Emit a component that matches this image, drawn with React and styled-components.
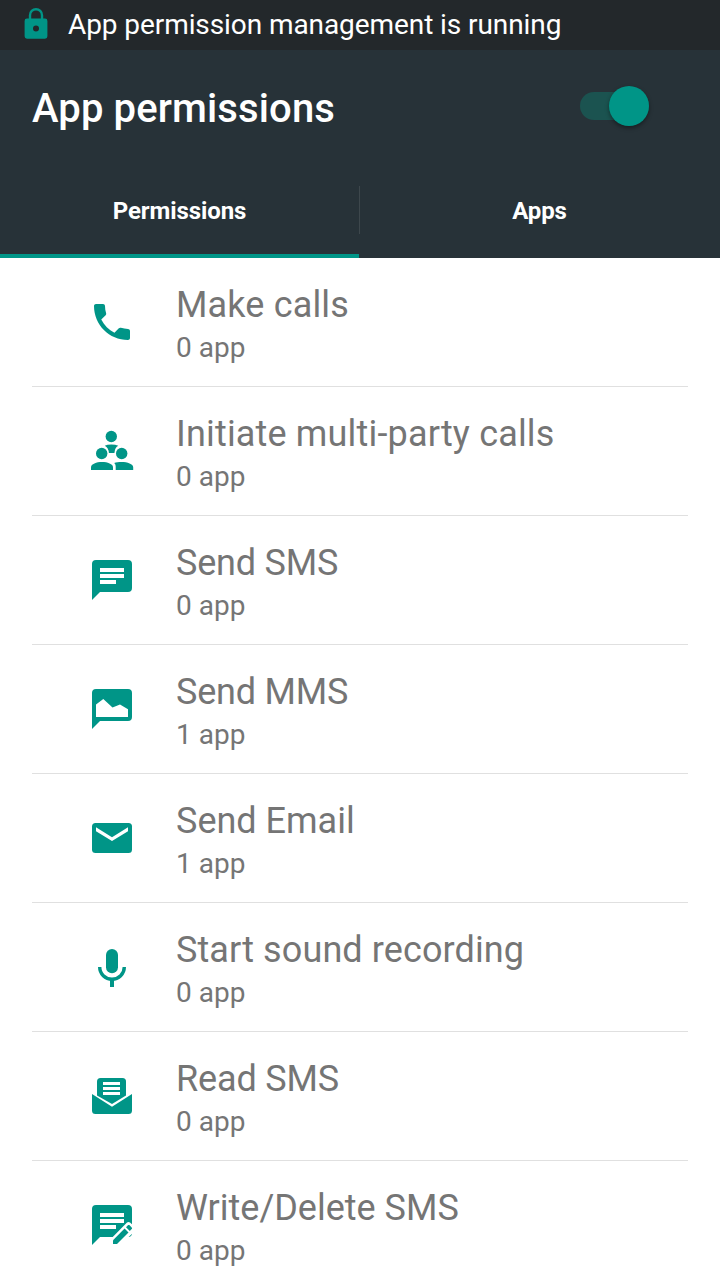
import React, { useState } from "react";
import styled, { createGlobalStyle } from "styled-components";

const GlobalStyle = createGlobalStyle`
  * {
    box-sizing: border-box;
  }

  body {
    margin: 0;
    background: #ffffff;
    font-family: Roboto, "Liberation Sans", sans-serif;
  }
`;

const Screen = styled.div`
  width: 720px;
  height: 1280px;
  overflow: hidden;
  background: #ffffff;
`;

const StatusBar = styled.div`
  display: flex;
  align-items: center;
  height: 50px;
  padding-left: 24px;
  background: #23282b;
  color: #ffffff;
  font-size: 28px;
  line-height: 50px;
  letter-spacing: -0.08px;
  white-space: nowrap;

  svg {
    width: 24px;
    height: 32px;
    margin: 0 20px 4px 0;
  }
`;

const Header = styled.header`
  height: 208px;
  background: #273238;
  color: #ffffff;
`;

const TitleBar = styled.div`
  display: flex;
  align-items: center;
  justify-content: space-between;
  height: 112px;
  padding: 0 71px 0 32px;
`;

const Title = styled.h1`
  margin: 6px 0 0;
  font-size: 40px;
  font-weight: 500;
  line-height: 48px;
  letter-spacing: 0.13px;
`;

const Toggle = styled.button`
  display: flex;
  align-items: center;
  justify-content: ${({ $on }) => ($on ? "flex-end" : "flex-start")};
  width: 69px;
  height: 28px;
  padding: 0;
  border: none;
  border-radius: 14px;
  background: ${({ $on }) => ($on ? "#1b5350" : "#4b5559")};
`;

const Thumb = styled.span`
  width: 40px;
  height: 40px;
  flex: none;
  border-radius: 50%;
  background: #009587;
  box-shadow: 0 2px 4px rgba(0, 0, 0, 0.4);
`;

const Tabs = styled.nav`
  display: flex;
  height: 96px;
`;

const Tab = styled.button`
  width: ${({ $width }) => $width}px;
  padding: 6px 0 0;
  border: none;
  border-bottom: 4px solid ${({ $active }) => ($active ? "#009587" : "transparent")};
  background: none;
  color: #ffffff;
  font-family: inherit;
  font-size: 24px;
  font-weight: 700;
  letter-spacing: -0.1px;
`;

const TabDivider = styled.span`
  width: 1px;
  height: 48px;
  margin-top: 24px;
  background: #3d474c;
`;

const List = styled.ul`
  margin: 0;
  padding: 0 32px;
  list-style: none;
`;

const Row = styled.li`
  display: flex;
  align-items: center;
  height: 129px;
  padding-left: 56px;
  border-bottom: 1px solid #e0e0e0;

  svg {
    width: 48px;
    height: 48px;
    margin-right: 40px;
  }
`;

const Label = styled.div`
  padding-top: 4px;
  color: #757575;
`;

const Name = styled.div`
  font-size: 36px;
  line-height: 44px;
  letter-spacing: ${({ $tracking }) => $tracking}px;
`;

const Count = styled.div`
  margin-top: 3px;
  font-size: 28px;
  line-height: 36px;
`;

const Icon = ({ children }) => (
  <svg viewBox="0 0 48 48" fill="#009587">
    {children}
  </svg>
);

const LockIcon = () => (
  <svg viewBox="0 0 24 32" fill="#009587">
    <path d="M6 12V8.200a6 6 0 0 1 12 0V12" fill="none" stroke="#009587" strokeWidth="2.400" />
    <path
      fillRule="evenodd"
      d="M3 11.500h18a2.400 2.400 0 0 1 2.400 2.400v15.400a2.400 2.400 0 0 1-2.400 2.400H3a2.400 2.400 0 0 1-2.400-2.400V13.900A2.400 2.400 0 0 1 3 11.500zM12 18.500a3 3 0 1 0 0 6 3 3 0 0 0 0-6z"
    />
  </svg>
);

const PhoneIcon = () => (
  <Icon>
    <path d="M13.250 21.590c2.880 5.660 7.510 10.290 13.180 13.170l4.400-4.410c.55-.55 1.340-.71 2.030-.49C35.100 30.610 37.510 31 40 31c1.110 0 2 .89 2 2v7c0 1.110-.89 2-2 2C21.220 42 6 26.780 6 8c0-1.110.9-2 2-2h7c1.110 0 2 .89 2 2 0 2.490.4 4.900 1.140 7.140.22.69.06 1.480-.49 2.030l-4.400 4.420z" />
  </Icon>
);

const PartyIcon = () => (
  <Icon>
    <circle cx="23.300" cy="9.500" r="5.700" />
    <path d="M16.800 18.700Q19 17.500 23.300 17.500t7 1.300Q27 20 26.400 26h-5.500Q20.500 20.500 16.800 18.700z" />
    <circle cx="13.700" cy="26.500" r="5.700" />
    <circle cx="33.700" cy="26.500" r="5.700" />
    <path d="M3 43v-2.700C3 37 8.500 35 14 35s11 2 11 5.300V43z" />
    <path d="M27.700 43v-3.200c0-1.800-.5-3-1.500-3.900 2-.6 4.500-.9 7.300-.9 6 0 11.700 2 11.700 5.300V43z" />
  </Icon>
);

const BUBBLE = "M8 4h32a4 4 0 0 1 4 4v24a4 4 0 0 1-4 4H12l-8 8V8a4 4 0 0 1 4-4z";

const SmsIcon = () => (
  <Icon>
    <path d={BUBBLE} />
    <path fill="#fff" d="M12 12h24v4H12zM12 18h24v4H12zM12 24h16v4H12z" />
  </Icon>
);

const MmsIcon = () => (
  <Icon>
    <path d={BUBBLE} />
    <path fill="#fff" d="M8 19.500l7.300-5.500 9.200 8.600 7.500-3.100 8 4.700V32H8z" />
  </Icon>
);

const EmailIcon = () => (
  <Icon>
    <rect x="4" y="9" width="40" height="30" rx="3.500" />
    <path fill="#fff" d="M8 13.300l16 9.900 16-9.900v3.900L24 27 8 17.200z" />
  </Icon>
);

const MicIcon = () => (
  <Icon>
    <rect x="18" y="6" width="12" height="24.300" rx="6" />
    <path d="M11.700 24a12.300 12.300 0 0 0 24.600 0" fill="none" stroke="#009587" strokeWidth="3.400" />
    <path d="M22 36h4v8h-4z" />
  </Icon>
);

const ReadIcon = () => (
  <Icon>
    <path d="M12.500 6h22a3.500 3.500 0 0 1 3.500 3.500v14L24 32 9 23.500v-14A3.500 3.500 0 0 1 12.500 6z" />
    <path fill="#fff" d="M15 10h17v3H15zM15 15h17v3H15zM15 20h17v3H15z" />
    <path d="M4 22l20 12.700L44 22v16.500a3.500 3.500 0 0 1-3.500 3.500h-33A3.500 3.500 0 0 1 4 38.500z" />
  </Icon>
);

const WriteIcon = () => (
  <Icon>
    <path d={BUBBLE} />
    <path fill="#fff" d="M12 12h24v4H12zM12 18h24v4H12zM12 24h16v4H12z" />
    <path fill="#fff" d="M23 37.800L39 21.600q1.500-1.300 3 0L46 25v6L31 45h-8z" />
    <path d="M25 39.200L36.600 27.600l3.900 3.900L29 43h-4z" />
    <path d="M38 26.200l1.900-1.900c.5-.5 1.200-.5 1.700 0l2.100 2.100c.5.5.5 1.200 0 1.700L41.800 30z" />
  </Icon>
);

const permissions = [
  { name: "Make calls", count: 0, icon: PhoneIcon, tracking: 0.15 },
  { name: "Initiate multi-party calls", count: 0, icon: PartyIcon, tracking: 0.17 },
  { name: "Send SMS", count: 0, icon: SmsIcon, tracking: -0.2 },
  { name: "Send MMS", count: 1, icon: MmsIcon, tracking: -0.2 },
  { name: "Send Email", count: 1, icon: EmailIcon, tracking: 0 },
  { name: "Start sound recording", count: 0, icon: MicIcon, tracking: 0.1 },
  { name: "Read SMS", count: 0, icon: ReadIcon, tracking: -0.15 },
  { name: "Write/Delete SMS", count: 0, icon: WriteIcon, tracking: 0 },
];

const App = () => {
  const [enabled, setEnabled] = useState(true);
  const [tab, setTab] = useState("permissions");

  return (
    <Screen>
      <GlobalStyle />
      <StatusBar>
        <LockIcon />
        App permission management is running
      </StatusBar>

      <Header>
        <TitleBar>
          <Title>App permissions</Title>
          <Toggle $on={enabled} onClick={() => setEnabled(!enabled)}>
            <Thumb />
          </Toggle>
        </TitleBar>
        <Tabs>
          <Tab $width={359} $active={tab === "permissions"} onClick={() => setTab("permissions")}>
            Permissions
          </Tab>
          <TabDivider />
          <Tab $width={359} $active={tab === "apps"} onClick={() => setTab("apps")}>
            Apps
          </Tab>
        </Tabs>
      </Header>

      <List>
        {permissions.map(({ name, count, icon: PermissionIcon, tracking }) => (
          <Row key={name}>
            <PermissionIcon />
            <Label>
              <Name $tracking={tracking}>{name}</Name>
              <Count>{count} app</Count>
            </Label>
          </Row>
        ))}
      </List>
    </Screen>
  );
};

export default App;
